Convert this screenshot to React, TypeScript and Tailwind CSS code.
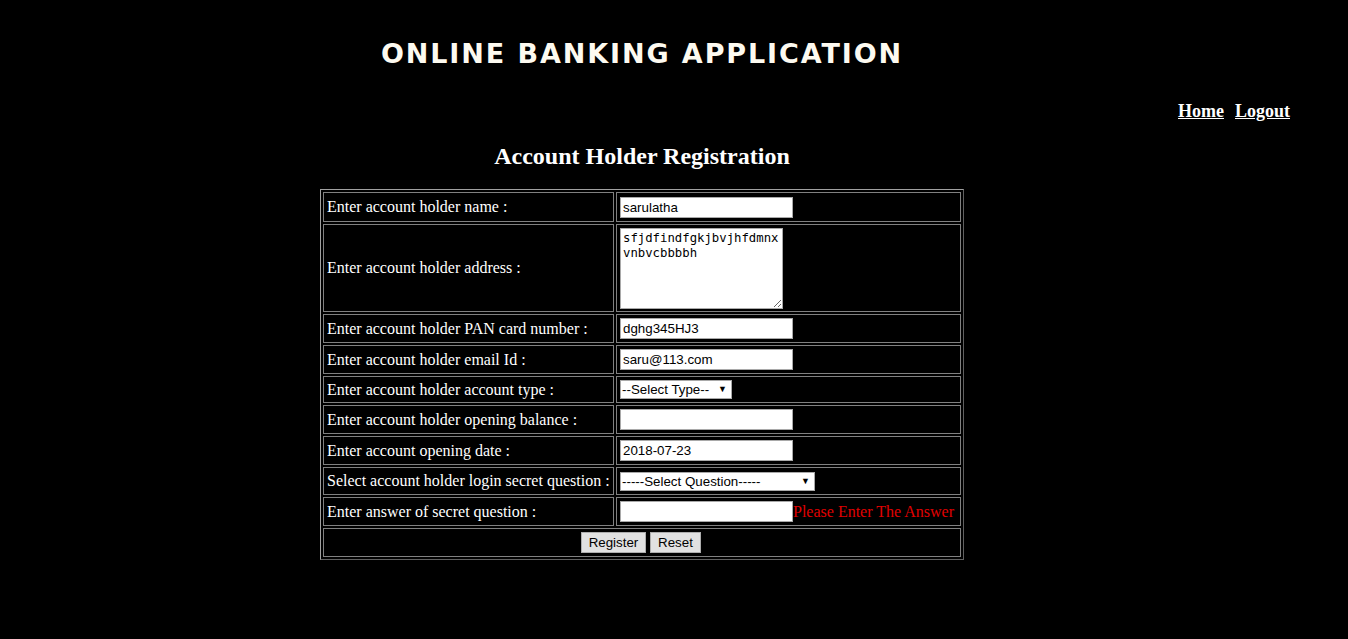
import React from "react";

const serif = "font-['Liberation_Serif','Times_New_Roman',serif]";
const arial = "font-['Liberation_Sans',Arial,sans-serif]";

function Label({ children, h }: { children: React.ReactNode; h: string }) {
  return (
    <td
      className={`w-[291px] ${h} border border-[#808080] px-[3px] py-0 align-middle text-left text-[16px] leading-[18px] text-white ${serif}`}
    >
      {children}
    </td>
  );
}

function Val({ children, h }: { children: React.ReactNode; h: string }) {
  return (
    <td className={`w-[345px] ${h} border border-[#808080] px-[3px] py-0 align-middle text-left`}>
      {children}
    </td>
  );
}

function TextInput({ value }: { value: string }) {
  return (
    <input
      type="text"
      defaultValue={value}
      className={`block h-[21px] w-[173px] border border-[#a9a9a9] bg-white px-[2px] text-[13.33px] leading-[15px] text-black outline-none ${arial}`}
    />
  );
}

function FakeSelect({ text, w }: { text: string; w: string }) {
  return (
    <div className={`relative h-[19px] ${w}`}>
      <select
        className={`block h-[19px] w-full appearance-none border border-[#a9a9a9] bg-white pl-[1px] pr-[14px] text-[13.33px] leading-[15px] text-black outline-none ${arial}`}
        defaultValue=""
      >
        <option value="">{text}</option>
      </select>
      <span className="pointer-events-none absolute right-[5px] top-[3px] text-[9px] leading-[12px] text-black">
        ▼
      </span>
    </div>
  );
}

export default function App() {
  return (
    <div className="min-h-[639px] w-full bg-black text-white">
      <div className="w-[1284px]">
        <div
          className="pt-[38px] text-center font-['DejaVu_Sans',sans-serif] text-[27px] font-bold leading-[32px] tracking-[1.9px] text-[#fdfaf0]"
        >
          ONLINE BANKING APPLICATION
        </div>
      </div>
      <div className={`mt-[31px] flex justify-end pr-[58px] text-[18px] font-bold leading-[20px] ${serif}`}>
        <a href="#" className="text-white underline">
          Home
        </a>
        <span className="w-[11px]" />
        <a href="#" className="text-white underline">
          Logout
        </a>
      </div>
      <div className="w-[1284px]">
        <h2 className={`mt-[21px] text-center text-[24px] font-bold leading-[28px] text-white ${serif}`}>
          Account Holder Registration
        </h2>
        <table className="mx-auto mt-[19px] border-separate border-spacing-[2px] border border-t-[#a0a0a0] border-l-[#a0a0a0] border-r-[#606060] border-b-[#606060]">
          <tbody>
            <tr>
              <Label h="h-[30px]">Enter account holder name :</Label>
              <Val h="h-[30px]">
                <TextInput value="sarulatha" />
              </Val>
            </tr>
            <tr>
              <Label h="h-[88px]">Enter account holder address :</Label>
              <Val h="h-[88px]">
                <textarea
                  defaultValue={"sfjdfindfgkjbvjhfdmnx\nvnbvcbbbbh"}
                  className="block h-[81px] w-[163px] resize border border-[#a9a9a9] bg-white px-[2px] py-[2px] font-['DejaVu_Sans_Mono',monospace] text-[12.3px] leading-[15px] text-black outline-none"
                />
              </Val>
            </tr>
            <tr>
              <Label h="h-[29px]">Enter account holder PAN card number :</Label>
              <Val h="h-[29px]">
                <TextInput value="dghg345HJ3" />
              </Val>
            </tr>
            <tr>
              <Label h="h-[29px]">Enter account holder email Id :</Label>
              <Val h="h-[29px]">
                <TextInput value="saru@113.com" />
              </Val>
            </tr>
            <tr>
              <Label h="h-[27px]">Enter account holder account type :</Label>
              <Val h="h-[27px]">
                <FakeSelect text="--Select Type--" w="w-[112px]" />
              </Val>
            </tr>
            <tr>
              <Label h="h-[29px]">Enter account holder opening balance :</Label>
              <Val h="h-[29px]">
                <TextInput value="" />
              </Val>
            </tr>
            <tr>
              <Label h="h-[29px]">Enter account opening date :</Label>
              <Val h="h-[29px]">
                <TextInput value="2018-07-23" />
              </Val>
            </tr>
            <tr>
              <Label h="h-[28px]">Select account holder login secret question :</Label>
              <Val h="h-[28px]">
                <FakeSelect text="-----Select Question-----" w="w-[195px]" />
              </Val>
            </tr>
            <tr>
              <Label h="h-[29px]">Enter answer of secret question :</Label>
              <Val h="h-[29px]">
                <div className="flex items-center">
                  <TextInput value="" />
                  <span className={`text-[16px] leading-[18px] text-[#e00000] ${serif}`}>
                    Please Enter The Answer
                  </span>
                </div>
              </Val>
            </tr>
            <tr>
              <td colSpan={2} className="h-[29px] border border-[#808080] px-[3px] py-0 align-middle">
                <div className="flex justify-center gap-[4px] pr-[2px]">
                  <button
                    type="button"
                    className={`h-[21px] w-[65px] border border-[#adadad] bg-[#e1e1e1] text-[13.33px] leading-[15px] text-black ${arial}`}
                  >
                    Register
                  </button>
                  <button
                    type="button"
                    className={`h-[21px] w-[51px] border border-[#adadad] bg-[#e1e1e1] text-[13.33px] leading-[15px] text-black ${arial}`}
                  >
                    Reset
                  </button>
                </div>
              </td>
            </tr>
          </tbody>
        </table>
      </div>
    </div>
  );
}
